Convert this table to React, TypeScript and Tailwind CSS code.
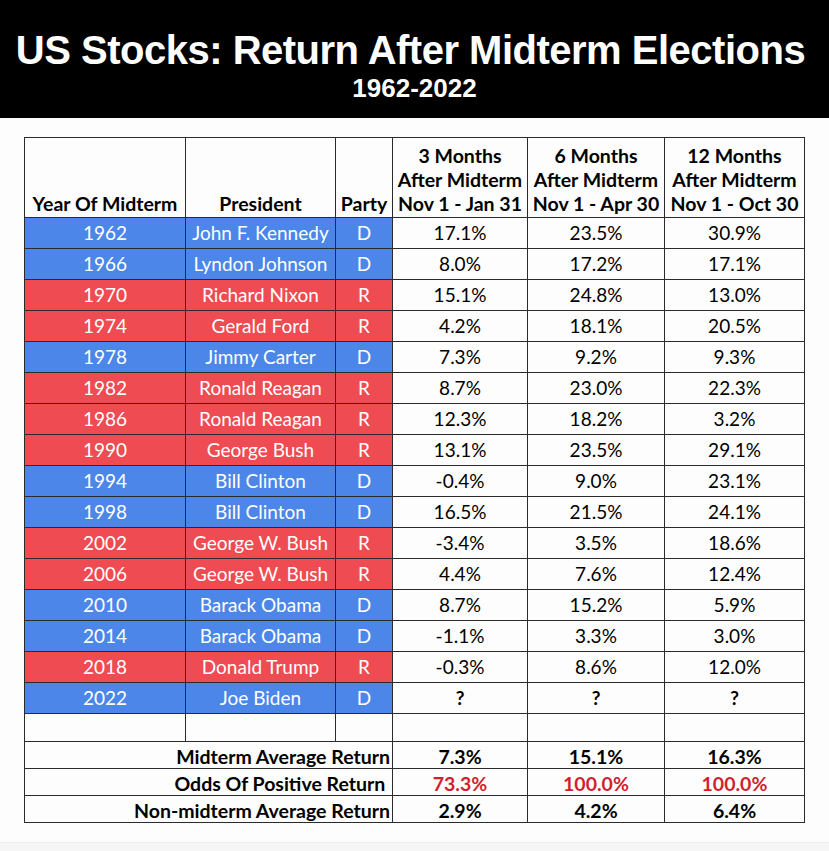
const rows: [string, string, string, string, string, string][] = [
  ["1962", "John F. Kennedy", "D", "17.1%", "23.5%", "30.9%"],
  ["1966", "Lyndon Johnson", "D", "8.0%", "17.2%", "17.1%"],
  ["1970", "Richard Nixon", "R", "15.1%", "24.8%", "13.0%"],
  ["1974", "Gerald Ford", "R", "4.2%", "18.1%", "20.5%"],
  ["1978", "Jimmy Carter", "D", "7.3%", "9.2%", "9.3%"],
  ["1982", "Ronald Reagan", "R", "8.7%", "23.0%", "22.3%"],
  ["1986", "Ronald Reagan", "R", "12.3%", "18.2%", "3.2%"],
  ["1990", "George Bush", "R", "13.1%", "23.5%", "29.1%"],
  ["1994", "Bill Clinton", "D", "-0.4%", "9.0%", "23.1%"],
  ["1998", "Bill Clinton", "D", "16.5%", "21.5%", "24.1%"],
  ["2002", "George W. Bush", "R", "-3.4%", "3.5%", "18.6%"],
  ["2006", "George W. Bush", "R", "4.4%", "7.6%", "12.4%"],
  ["2010", "Barack Obama", "D", "8.7%", "15.2%", "5.9%"],
  ["2014", "Barack Obama", "D", "-1.1%", "3.3%", "3.0%"],
  ["2018", "Donald Trump", "R", "-0.3%", "8.6%", "12.0%"],
  ["2022", "Joe Biden", "D", "?", "?", "?"],
];

const summary: { label: string; values: string[]; red?: boolean }[] = [
  { label: "Midterm Average Return", values: ["7.3%", "15.1%", "16.3%"] },
  { label: "Odds Of Positive Return ", values: ["73.3%", "100.0%", "100.0%"], red: true },
  { label: "Non-midterm Average Return", values: ["2.9%", "4.2%", "6.4%"] },
];

const cell = "border-r border-b border-[#2b2b2b] flex items-center justify-center";
const head = "h-[80px] border-r border-b border-[#2b2b2b] flex flex-col items-center justify-end pb-[1px] font-bold text-[19.5px] leading-[24px] whitespace-nowrap";

export default function App() {
  return (
    <div className="w-[829px] h-[851px] bg-[#fdfdfd] flex flex-col font-['Lato',sans-serif] text-[19px] text-black">
      {/* Title banner */}
      <div className="h-[118px] bg-black flex flex-col items-center pt-[27px] text-white font-['Liberation_Sans',Arial,sans-serif] font-bold">
        <div className="text-[40px] leading-[46px] tracking-[-0.5px] -translate-x-[4px]">US Stocks: Return After Midterm Elections</div>
        <div className="text-[26px] leading-[28px] mt-[1px]">1962-2022</div>
      </div>

      <div className="flex-1 pt-[19px] pl-[24px]">
        <div className="w-[781px] border-l border-t border-[#2b2b2b] grid grid-cols-[161px_150px_57px_135px_137px_140px]">
          {/* Header */}
          <div className={head}>Year Of Midterm</div>
          <div className={head}>President</div>
          <div className={head}>Party</div>
          <div className={head}>
            <span>3 Months</span>
            <span>After Midterm</span>
            <span>Nov 1 - Jan 31</span>
          </div>
          <div className={head}>
            <span>6 Months</span>
            <span>After Midterm</span>
            <span>Nov 1 - Apr 30</span>
          </div>
          <div className={head}>
            <span>12 Months</span>
            <span>After Midterm</span>
            <span>Nov 1 - Oct 30</span>
          </div>

          {/* Data rows */}
          {rows.map(([year, pres, party, a, b, c]) => {
            const bg = party === "D" ? "bg-[#4b86e8]" : "bg-[#ee4b52]";
            const q = a === "?" ? "font-bold" : "";
            return (
              <div key={year} className="contents">
                <div className={`${cell} ${bg} h-[31px] pt-[1px] text-white`}>{year}</div>
                <div className={`${cell} ${bg} h-[31px] pt-[1px] text-white whitespace-nowrap`}>{pres}</div>
                <div className={`${cell} ${bg} h-[31px] pt-[1px] text-white`}>{party}</div>
                <div className={`${cell} h-[31px] pt-[1px] ${q}`}>{a}</div>
                <div className={`${cell} h-[31px] pt-[1px] ${q}`}>{b}</div>
                <div className={`${cell} h-[31px] pt-[1px] ${q}`}>{c}</div>
              </div>
            );
          })}

          {/* Blank row */}
          <div className={`${cell} h-[28px]`} />
          <div className={`${cell} h-[28px]`} />
          <div className={`${cell} h-[28px]`} />
          <div className={`${cell} h-[28px]`} />
          <div className={`${cell} h-[28px]`} />
          <div className={`${cell} h-[28px]`} />

          {/* Summary rows */}
          {summary.map((s) => (
            <div key={s.label} className="contents">
              <div className="col-span-3 h-[27px] pt-[3px] border-r border-b border-[#2b2b2b] flex items-center justify-end pr-[2px] font-bold text-[19.5px] whitespace-pre">
                {s.label}
              </div>
              {s.values.map((v, i) => (
                <div key={i} className={`${cell} h-[27px] pt-[3px] font-bold text-[19.5px] ${s.red ? "text-[#d21f2f]" : ""}`}>
                  {v}
                </div>
              ))}
            </div>
          ))}
        </div>
      </div>

      <div className="h-[9px] border-t border-[#ececec] bg-[#f6f6f6]" />
    </div>
  );
}
